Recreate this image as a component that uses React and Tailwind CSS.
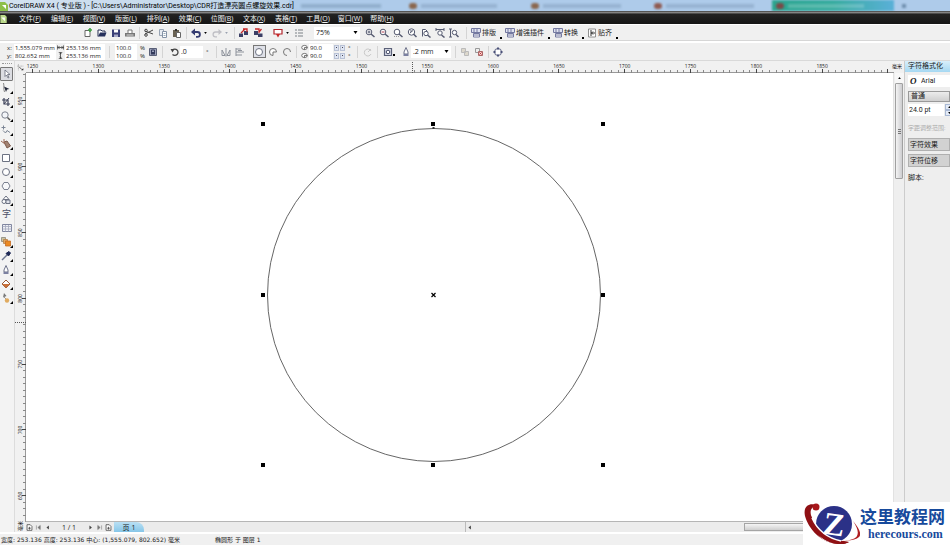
import React from "react";

const ink = "#555a70";
const shapes = {
  fresh: <><path d="M2 2.5h5v6H2z" fill="#fff" stroke="#666" /><path d="M7 0v4M5 2h4" stroke="#43a047" strokeWidth="1.6" /></>,
  open: <><path d="M1 8.5V2h3l1 1h3v1.5" fill="#fff" stroke="#222c50" /><path d="M1 8.5L3 4.5h6.5L8 8.5z" fill="#26305c" /></>,
  save: <><path d="M1 1.5h8v7.5H1z" fill="#3a3f78" /><path d="M3 1.5h4v3H3z" fill="#fff" /><path d="M3 6.5h4V9H3z" fill="#a9abc9" /></>,
  print: <><path d="M3 5V2h4v3" fill="#fff" stroke="#777" /><path d="M0 5h10v3.500H0z" fill="#777" /><path d="M1.500 7h7" stroke="#ddd" /></>,
  cut: <><path d="M1 3l8 3M1 6l8-4" stroke="#444" /><circle cx="2" cy="2.5" r="1.3" stroke="#444" fill="none" /><circle cx="2" cy="7" r="1.3" stroke="#444" fill="none" /></>,
  copy: <><path d="M1.5 1.5h4v6h-4z" fill="#e8ecf2" stroke="#98a4b4" /><path d="M4.5 3.5h4v6h-4z" fill="#fff" stroke="#8492a6" /><path d="M5.5 5.5h2M5.5 7.5h2" stroke="#9ab" /></>,
  paste: <><path d="M1 2h6v7H1z" fill="#6a6253" /><path d="M3 1h2v2H3z" fill="#333" /><path d="M4.500 4.500h4v5h-4z" fill="#fff" stroke="#666" /></>,
  undo: <><path d="M2 4h4.500a2.300 2.300 0 0 1 0 4.800H5" fill="none" stroke="#343b70" strokeWidth="1.800" /><path d="M0 4l4-3.500v7z" fill="#343b70" /></>,
  redo: <><path d="M8 4H3.500a2.300 2.300 0 0 0 0 4.800H5" fill="none" stroke="#c0c0c6" strokeWidth="1.300" /><path d="M10 4L6.500 1v6z" fill="#c0c0c6" /></>,
  importer: <><path d="M0 5.500h4V9H0zM5 3h4v4H5z" fill="#3b3f66" /><path d="M2 5l4-4M4 1h4v3" stroke="#c62828" strokeWidth="1.300" fill="none" /></>,
  exporter: <><path d="M1 3h4v4H1zM5 5.500h4.500V9H5z" fill="#3b3f66" /><path d="M2 1h4v4M8.500 1L6 4" stroke="#c62828" strokeWidth="1.300" fill="none" /></>,
  launch: <><path d="M1 1.500h8v4.500H1z" fill="#fff" stroke="#b3262d" strokeWidth="1.200" /><path d="M3 6h4L5 9.500z" fill="#c62828" /></>,
  list: <path d="M1 2h2M1 5h2M1 8h2M4 2h5M4 5h5M4 8h5" stroke="#7a8086" />,
  zoomIn: <><circle cx="4" cy="4" r="2.800" fill="#fff" stroke={ink} /><path d="M2.500 4h3M4 2.500v3" stroke={ink} /><path d="M6 6l3.500 3" stroke={ink} strokeWidth="1.500" /></>,
  zoomOut: <><circle cx="4" cy="4" r="2.800" fill="#fff" stroke={ink} /><path d="M2.500 4h3" stroke="#b04050" /><path d="M6 6l3.500 3" stroke={ink} strokeWidth="1.500" /></>,
  zoomSel: <><circle cx="4" cy="4" r="2.800" fill="#fff" stroke={ink} /><path d="M1 8.500h6" stroke="#999" strokeDasharray="1 1" /><path d="M6 6l3.500 3" stroke={ink} strokeWidth="1.500" /></>,
  zoomAll: <><circle cx="4.500" cy="4" r="3.200" fill="#fff" stroke={ink} /><path d="M3 5l3-2.500M3 3h2" stroke={ink} /><path d="M6.500 6l3 3" stroke={ink} strokeWidth="1.500" /></>,
  zoomPage: <><path d="M1.500 8.500v-7h3l2 2" fill="#fff" stroke={ink} /><circle cx="5" cy="5.500" r="2.200" fill="#fff" stroke={ink} /><path d="M6.500 7l3 2.500" stroke={ink} strokeWidth="1.500" /></>,
  zoomWide: <><path d="M1 1.500h8M1 0v3M9 0v3" stroke={ink} /><circle cx="5" cy="5" r="2.200" fill="#fff" stroke={ink} /><path d="M6.500 7l3 2.500" stroke={ink} strokeWidth="1.500" /></>,
  zoomTall: <><path d="M1.500 1v8M0 1h3M0 9h3" stroke={ink} /><circle cx="5.500" cy="4.500" r="2.200" fill="#fff" stroke={ink} /><path d="M7 6.500l2.500 2.500" stroke={ink} strokeWidth="1.500" /></>,
  plugin: <><path d="M.5 .5h9v4h-9z" fill="#dfe2f0" stroke="#7479a0" /><path d="M2.500 5.500h6v3.500h-6z" fill="#fff" stroke="#7479a0" /><path d="M3 .5v4M6 .5v4M3 7h5" stroke="#7479a0" /></>,
  snap: <><path d="M1.500 1v8h7V1z" fill="#fff" stroke="#777" strokeWidth=".8" /><path d="M4 2v6M4 5h4M6 3.500L4.500 5 6 6.500" stroke="#333" /></>,
  width: <path d="M.5 2v6M9.500 2v6M1 5h8M3.500 3L1.500 5l2 2M6.500 3l2 2-2 2" stroke="#222" fill="none" />,
  height: <path d="M2.500 .5h5M2.500 9.500h5M5 1v8M3.500 3L5 1.500 6.500 3M3.500 7L5 8.500 6.500 7" stroke="#222" fill="none" />,
  lock: <><path d="M1.500 1.500h7v7h-7z" fill="#9ba0b8" stroke="#5a6078" /><path d="M3 5h4v2.500H3z" fill="#333a5c" /><path d="M3.500 5V3h3v2" stroke="#333a5c" fill="none" /></>,
  rotate: <><path d="M2.500 3a3.200 3.200 0 1 1 0 4.500" fill="none" stroke="#444" strokeWidth="1.300" /><path d="M.5 2h4L2.500 5.500z" fill="#444" /></>,
  mirrorH: <path d="M1 8.500V3l3 5.500zM9 8.500V3L6 8.500zM5 1v8.500" fill="none" stroke="#8e939c" />,
  mirrorV: <path d="M1 2h5M1 5h8M1 8h6M1 1v8M3 3.500h4" fill="none" stroke="#8e939c" />,
  ellipse: <circle cx="5" cy="5" r="3.500" fill="#fff" stroke="#6c7282" />,
  pie: <path d="M5 5h3.500A3.500 3.500 0 1 0 5 8.500z" fill="#fff" stroke="#777" />,
  arc: <path d="M5 8.500A3.500 3.500 0 1 1 8.500 5" fill="none" stroke="#777" />,
  angle: <><ellipse cx="5" cy="5" rx="4" ry="3" fill="#fff" stroke="#444" /><path d="M5 5h4M5 5v3" stroke="#444" /></>,
  dim: <><path d="M8 4A3.500 3.500 0 1 0 8 7" fill="none" stroke="#c9c9c9" /><path d="M5 5l3-3" stroke="#c9c9c9" /></>,
  wrap: <><path d="M1.500 1.500h7v7h-7z" fill="#d9dce8" stroke="#5a6078" strokeWidth="1.200" /><circle cx="5" cy="5" r="1.800" fill="#fff" stroke="#444a66" /></>,
  nib: <><path d="M5 .5L3 5v2h4V5z" fill="#fff" stroke="#6b7088" /><path d="M2.500 7h5v2h-5z" fill="#7b80a0" /></>,
  back: <path d="M1.500 1.500h4v4h-4zM4.500 4.500h4v4h-4z" fill="#ddd8cc" stroke="#bbb" />,
  front: <><path d="M1.500 1.500h4v4h-4z" fill="#eee" stroke="#999" /><path d="M4.500 4.500h4v4h-4z" fill="#f6d3d3" stroke="#a66" /><path d="M5.500 5.500l2 2M7.500 5.500l-2 2" stroke="#b33" /></>,
  convert: <><circle cx="5" cy="5" r="3.500" fill="#fff" stroke="#5a6080" /><path d="M4 .5h2v2H4zM4 7.500h2v2H4zM.5 4h2v2h-2zM7.500 4h2v2h-2z" fill="#4a5078" /></>,
  pick: <path d="M3 1l5 4.500H5.500L7 8.500l-1 .5-1.500-3L3 7.500z" fill="#fff" stroke="#666b78" strokeWidth=".8" />,
  shape: <><path d="M2.500 0C3.500 3 2 5 3.500 9" fill="none" stroke="#888" /><path d="M3 3.500l5.500 2.500-2.500.500-1 2.500z" fill="#23283a" /></>,
  crop: <><path d="M3 1v6h6M1 3h6v6" fill="none" stroke="#3b4058" strokeWidth="1.200" /><path d="M3 7l5-6" stroke="#3b4058" /></>,
  loupe: <><circle cx="4" cy="4" r="3.200" fill="#f2f4f8" stroke="#7d828e" /><path d="M6.500 6.500L9 9" stroke="#555" strokeWidth="1.500" /></>,
  free: <><path d="M2 5.500L4.500 8 6 5.500l3 2" fill="none" stroke="#7b8494" /><path d="M2.500 .5v4M.5 2.500h4" stroke="#7b8494" /></>,
  smart: <><path d="M3 3l3-1 3.500 5L6 9z" fill="#a28272" stroke="#7b5a4c" /><path d="M0 2l4 3M3 0v4" stroke="#9b6b58" /></>,
  rect: <path d="M1.500 1.500h7v7h-7z" fill="#fff" stroke="#6c7282" />,
  poly: <path d="M3 1.500h4l2 3.500-2 3.500H3L1 5z" fill="#f7f8fa" stroke="#7b8190" />,
  basic: <><path d="M5 1L8 4.500H2z" fill="#fff" stroke="#6c7282" /><circle cx="3" cy="6.500" r="2" fill="#fff" stroke="#6c7282" /><path d="M5 5h4v3.500H5z" fill="#dfe2ea" stroke="#6c7282" /></>,
  table: <><path d="M.5 1.500h9v7h-9z" fill="#eef0f6" stroke="#8086a0" /><path d="M.5 3.500h9M.5 6h9M3.500 2v6.500M6.500 2v6.500" stroke="#a3a8bc" strokeWidth=".8" /></>,
  blend: <><path d="M.5 .5h4v4h-4z" fill="#c9c4a4" stroke="#8b8778" strokeWidth=".8" /><path d="M2.500 2.500h4v4h-4z" fill="#e0a860" stroke="#b88048" strokeWidth=".8" /><path d="M4.500 4h5v5h-5z" fill="#ec8a22" stroke="#c46c24" strokeWidth=".8" /></>,
  dropper: <><path d="M1 9l5-5" stroke="#6d7690" strokeWidth="1.500" /><path d="M5 2.500l2.500 2.500L9.500 2 8 .5z" fill="#1e2956" stroke="#1e2956" /></>,
  fill: <><path d="M1 5l4-4 4 4-4 4z" fill="#fff" stroke="#9b5a38" /><path d="M1 5h8L5 9z" fill="#c9713a" /></>,
  inter: <><path d="M3 0l2.500 3L2 4.500z" fill="#777" /><path d="M3 4l3 3" stroke="#999" /><circle cx="6" cy="7.500" r="2.200" fill="#e0ab60" /></>,
  page: <><path d="M1.500 1h4.500l2.500 2.500V9h-7z" fill="#fff" stroke="#333" /><path d="M3 6h4M5 4v4" stroke="#333" /></>,
  first: <path d="M2 2v6M7.500 2L4 5l3.500 3z" fill="#777" stroke="#777" strokeWidth=".8" />,
  prev: <path d="M7 2L3.500 5 7 8z" fill="#444" />,
  next: <path d="M3.500 2L7 5 3.500 8z" fill="#444" />,
  last: <path d="M8 2v6M2.500 2L6 5 2.500 8z" fill="#777" stroke="#777" strokeWidth=".8" />,
  origin: <><path d="M2 0v10M0 3h10" stroke="#888" strokeDasharray="1 1" /><path d="M3 4l4 4" stroke="#222" /><path d="M9 9H6l3-3z" fill="#222" /></>,
};

function Icon({ name, small }) {
  return (
    <svg viewBox="0 0 10 10" aria-hidden="true" className={small ? "h-[7px] w-[7px] shrink-0" : "h-[10px] w-[10px] shrink-0"} fill="none">
      {shapes[name]}
    </svg>
  );
}

function Tool({ name, label }) {
  return (
    <button aria-label={label} className="flex shrink-0 items-center">
      <Icon name={name} />
    </button>
  );
}

function Caret({ dim }) {
  return (
    <button aria-label="更多" className="flex w-2 shrink-0 justify-center">
      <svg viewBox="0 0 4 3" className={dim ? "h-[2px] w-[3px] fill-gray-400" : "h-[2px] w-[3px] fill-black"}><path d="M0 0h4L2 3z" /></svg>
    </button>
  );
}

function Sep() {
  return <span className="mx-1 h-3 w-px shrink-0 bg-[#d4d4d4]" />;
}

function Choice({ label, value, width }) {
  return (
    <span className={"relative flex h-3 shrink-0 items-center bg-white " + width}>
      <select aria-label={label} className="h-full w-full appearance-none bg-transparent pl-[2px] text-[7px] leading-3 outline-none">
        <option>{value}</option>
      </select>
      <svg viewBox="0 0 4 3" className="pointer-events-none absolute right-[2px] h-[3px] w-[5px]"><path d="M0 0h4L2 3z" /></svg>
    </span>
  );
}

function Field({ label, value, width }) {
  return <input aria-label={label} defaultValue={value} className={"h-2 shrink-0 bg-white px-px text-[6px] leading-[8px] outline-none " + width} />;
}

const menus = [["文件", "F"], ["编辑", "E"], ["视图", "V"], ["版面", "L"], ["排列", "A"], ["效果", "C"], ["位图", "B"], ["文本", "X"], ["表格", "T"], ["工具", "O"], ["窗口", "W"], ["帮助", "H"]];

function TitleBar() {
  return (
    <header className="flex h-[11px] shrink-0 items-center overflow-hidden bg-[#aecbea]">
      <div className="flex h-full w-[289px] shrink-0 items-center gap-px bg-linear-to-r from-[#d3e2f0] to-[#bdd4ea]">
        <svg viewBox="0 0 8 10" className="h-[10px] w-2 shrink-0"><path d="M0 1h5l3 3v6H0z" fill="#8cc04b" /><path d="M2 4l4 4V4z" fill="#fff" /></svg>
        <h1 className="text-[7px] leading-[10px] whitespace-nowrap text-black [font-family:Roboto,'Noto_Sans_CJK_SC',sans-serif]">CorelDRAW X4 ( 专业版 ) - [C:\Users\Administrator\Desktop\CDR打造漂亮圆点螺旋效果.cdr]</h1>
      </div>
      <div className="flex h-full flex-1 items-center blur-[1px]">
        <span className="ml-3 h-1 w-[80px] bg-[#7f9cb9]/60" />
        <span className="ml-7 h-[6px] w-2 rounded-full bg-[#8a674e]" />
        <span className="ml-1 h-1 w-[76px] bg-[#7f9cb9]/50" />
        <span className="ml-[34px] h-[6px] w-2 rounded-full bg-[#8a674e]" />
        <span className="ml-1 h-1 w-[78px] bg-[#7f9cb9]/50" />
        <span className="ml-[33px] h-[6px] w-2 rounded-full bg-[#8f5a50]" />
        <span className="ml-1 h-1 w-[88px] bg-[#7f9cb9]/50" />
        <span className="ml-[18px] flex h-full w-[122px] items-center bg-linear-to-r from-[#2ba58f] via-[#35ab9e] to-[#5ab0d8] pl-1">
          <span className="h-[6px] w-2 rounded-full bg-[#7b4a48]" />
          <span className="ml-1 h-1 w-[76px] bg-white/20" />
        </span>
        <span className="ml-2 h-1 w-1 bg-[#6f8eae]" />
      </div>
    </header>
  );
}

function MenuBar() {
  return (
    <nav className="flex h-[14px] shrink-0 items-center border-t border-b border-t-[#555] border-b-white bg-linear-to-b from-[#a0a0a0] from-0% via-[#222] via-20% to-[#161616] to-100%">
      <svg viewBox="0 0 8 10" className="mr-[6px] h-[9px] w-2"><path d="M0 1h5l2 2v7H0z" fill="#b9d88a" /><path d="M1 4l4 4V4z" fill="#fff" /></svg>
      <ul className="flex">
        {menus.map(([name, key]) => (
          <li key={key} className="w-8">
            <button className="block w-full text-center text-[7px] leading-[11px] whitespace-nowrap text-[#f2f2f2]">{name}(<u>{key}</u>)</button>
          </li>
        ))}
      </ul>
    </nav>
  );
}

function StandardBar() {
  return (
    <div className="flex h-4 shrink-0 items-center border-b border-[#d6d6d6] bg-[#f0f0f0] pl-[83px]">
      <div className="flex gap-1">
        <Tool name="fresh" label="新建" />
        <Tool name="open" label="打开" />
        <Tool name="save" label="保存" />
        <Tool name="print" label="打印" />
      </div>
      <Sep />
      <div className="flex gap-1">
        <Tool name="cut" label="剪切" />
        <Tool name="copy" label="复制" />
        <Tool name="paste" label="粘贴" />
      </div>
      <Sep />
      <Tool name="undo" label="撤消" />
      <Caret />
      <span className="w-[3px]" />
      <Tool name="redo" label="重做" />
      <Caret dim />
      <Sep />
      <div className="flex gap-1">
        <Tool name="importer" label="导入" />
        <Tool name="exporter" label="导出" />
      </div>
      <span className="w-[10px]" />
      <Tool name="launch" label="应用程序启动器" />
      <Caret />
      <span className="w-[3px]" />
      <Tool name="list" label="欢迎屏幕" />
      <span className="w-[10px]" />
      <Choice label="缩放级别" value="75%" width="w-[46px]" />
      <div className="ml-[5px] flex gap-1">
        <Tool name="zoomIn" label="放大" />
        <Tool name="zoomOut" label="缩小" />
        <Tool name="zoomSel" label="缩放选定范围" />
        <Tool name="zoomAll" label="缩放全部对象" />
        <Tool name="zoomPage" label="显示页面" />
        <Tool name="zoomWide" label="按页宽显示" />
        <Tool name="zoomTall" label="按页高显示" />
      </div>
      <span className="w-[3px]" />
      <Sep />
      {[["plugin", "排版"], ["plugin", "增强插件"], ["plugin", "转换"], ["snap", "贴齐"]].map(([icon, text]) => (
        <div key={text} className="flex items-center pr-[3px]">
          <button className="flex items-center gap-px text-[7px] leading-3 whitespace-nowrap"><Icon name={icon} />{text}</button>
          <span className="ml-1 h-[2px] w-[2px] self-end bg-black" />
        </div>
      ))}
    </div>
  );
}

function PropertyBar() {
  return (
    <div className="flex h-5 shrink-0 items-center border-t-2 border-b border-t-white border-b-[#d9d9d9] bg-[#f0f0f0] pl-[7px] text-[6px] leading-[8px]">
      <div>
        <label className="flex"><span className="w-[7px]">x:</span><Field label="x" value="1,555.079 mm" width="w-[42px]" /></label>
        <label className="flex"><span className="w-[7px]">y:</span><Field label="y" value="802.652 mm" width="w-[42px]" /></label>
      </div>
      <div className="ml-px">
        <label className="flex items-center gap-px"><Icon name="width" small /><Field label="宽度" value="253.136 mm" width="w-[40px]" /></label>
        <label className="flex items-center gap-px"><Icon name="height" small /><Field label="高度" value="253.136 mm" width="w-[40px]" /></label>
      </div>
      <Sep />
      <span className="w-px" />
      <div>
        <label className="flex gap-[3px]"><Field label="水平比例" value="100.0" width="w-[22px]" />%</label>
        <label className="flex gap-[3px]"><Field label="垂直比例" value="100.0" width="w-[22px]" />%</label>
      </div>
      <span className="w-[3px]" />
      <Tool name="lock" label="锁定比例" />
      <Sep />
      <span className="w-[3px]" />
      <label className="flex h-3 items-center">
        <Icon name="rotate" />
        <input aria-label="旋转角度" defaultValue=".0" className="h-3 w-[23px] bg-white px-px text-[7px] outline-none" />
        <span className="ml-[3px] w-[6px]">°</span>
      </label>
      <Sep />
      <div className="flex gap-1">
        <Tool name="mirrorH" label="水平镜像" />
        <Tool name="mirrorV" label="垂直镜像" />
      </div>
      <span className="w-2" />
      <button aria-label="椭圆形" aria-pressed="true" className="flex h-[13px] w-[13px] shrink-0 items-center justify-center border border-[#777] bg-[#dfe1e8]"><Icon name="ellipse" /></button>
      <div className="ml-[2px] flex gap-1">
        <Tool name="pie" label="饼形" />
        <Tool name="arc" label="弧形" />
      </div>
      <Sep />
      <div>
        {["起始角度", "结束角度"].map((label) => (
          <label key={label} className="flex items-center">
            <Icon name="angle" small />
            <span className="w-px" />
            <Field label={label} value="90.0" width="w-[24px]" />
            <span className="ml-px flex gap-px">
              <button aria-label="减少" className="flex h-[6px] w-[5px] items-center justify-center border border-[#b9c2d6] bg-[#dfe5f2]"><span className="h-px w-px bg-[#445]" /></button>
              <button aria-label="增加" className="flex h-[6px] w-[5px] items-center justify-center border border-[#b9c2d6] bg-[#dfe5f2]"><span className="h-px w-px bg-[#445]" /></button>
            </span>
            <span className="ml-[3px] w-[5px]">°</span>
          </label>
        ))}
      </div>
      <Sep />
      <span className="w-px" />
      <Tool name="dim" label="方向" />
      <Sep />
      <span className="w-px" />
      <Tool name="wrap" label="段落文本换行" />
      <span className="mr-[6px] mb-1 h-[2px] w-[2px] self-end bg-black" />
      <Tool name="nib" label="轮廓" />
      <Choice label="轮廓宽度" value=".2 mm" width="w-[40px]" />
      <Sep />
      <div className="flex gap-1">
        <Tool name="back" label="到图层后面" />
        <Tool name="front" label="到图层前面" />
      </div>
      <Sep />
      <Tool name="convert" label="转换为曲线" />
    </div>
  );
}

const toolbox = [["pick", "挑选"], ["shape", "形状"], ["crop", "裁剪"], ["loupe", "缩放"], ["free", "手绘"], ["smart", "智能填充"], ["rect", "矩形"], ["ellipse", "椭圆形"], ["poly", "多边形"], ["basic", "基本形状"], ["text", "文本"], ["table", "表格"], ["blend", "交互式调和"], ["dropper", "滴管"], ["nib", "轮廓"], ["fill", "填充"], ["inter", "交互式填充"]];
const plain = ["pick", "text", "table"];

function Toolbox() {
  return (
    <aside className="w-[15px] shrink-0 border-r border-[#dcdcdc] bg-[#f3f3f3] pt-[2px]">
      <div className="mx-[2px] mb-[3px] border-t border-dotted border-[#999]" />
      {toolbox.map(([name, label]) => (
        <button key={name} aria-label={label} className={"flex h-[14px] w-[13px] items-center justify-center " + (name === "pick" ? "rounded-[1px] border border-[#777] bg-[#dcdde2]" : "")}>
          {name === "text" ? <span className="text-[9px] leading-[14px] text-[#4b5068]">字</span> : <Icon name={name} />}
          {!plain.includes(name) && <svg viewBox="0 0 3 3" className="mb-px -ml-px h-[3px] w-[3px] shrink-0 self-end"><path d="M3 0v3H0z" /></svg>}
        </button>
      ))}
    </aside>
  );
}

const step = 6.58;

function HorizontalRuler() {
  const ticks = Array.from({ length: 131 }, (_, i) => i);
  return (
    <div className="flex h-3 shrink-0 bg-[#f1f1f1]">
      <button aria-label="标尺原点" className="flex w-[11px] shrink-0 items-center justify-center"><Icon name="origin" small /></button>
      <svg className="h-3 min-w-0 flex-1" fontSize="5" textAnchor="middle">
        <path d="M0 11.500H868" stroke="#999" />
        {ticks.map((i) => <path key={i} d={`M${Math.round(6 + i * step) + 0.5} ${i % 10 ? 9 : 8}V12`} stroke={i % 10 ? "#888" : "#444"} />)}
        {Array.from({ length: 13 }, (_, i) => <text key={i} x={6.5 + i * step * 10} y="7" fill="#222">{1250 + i * 50}</text>)}
        <path d="M386.500 1v11" stroke="#555" strokeDasharray="1 1" />
        <text x="871" y="7" fontSize="5">毫米</text>
      </svg>
    </div>
  );
}

function VerticalRuler() {
  const ticks = Array.from({ length: 68 }, (_, i) => i);
  return (
    <svg className="h-full w-[11px] shrink-0 bg-[#f1f1f1]" fontSize="5" textAnchor="middle">
      <path d="M10.500 0V449" stroke="#999" />
      {ticks.map((i) => <path key={i} d={`M${(i + 6) % 10 ? 8 : 7} ${Math.round(1 + i * step) + 0.5}H11`} stroke={(i + 6) % 10 ? "#888" : "#444"} />)}
      {[950, 900, 850, 800, 750, 700, 650].map((n, i) => {
        const y = 28 + i * step * 10;
        return <text key={n} x="7" y={y} transform={`rotate(-90 7 ${y})`} fill="#222">{n}</text>;
      })}
      <path d="M0 249.500h11" stroke="#555" strokeDasharray="1 1" />
      <text x="7" y="453" transform="rotate(-90 7 453)">毫米</text>
    </svg>
  );
}

function Canvas() {
  const xs = [237, 407, 577];
  const ys = [51, 222, 392];
  return (
    <svg className="h-full min-w-0 flex-1 bg-white" role="img" aria-label="椭圆形">
      <circle cx="408" cy="222" r="166.500" fill="none" stroke="#555" strokeWidth=".9" />
      {xs.map((x, i) => ys.map((y, j) => (i === 1 && j === 1 ? null : <rect key={`${x}-${y}`} x={x - 2} y={y - 2} width="4" height="4" />)))}
      <path d="M405.500 220l4 4M409.500 220l-4 4" stroke="#000" strokeWidth="1.200" />
      <rect x="406.500" y="54" width="2" height="2" fill="#333" />
    </svg>
  );
}

function PageBar() {
  return (
    <div className="flex h-[11px] shrink-0 items-center border-t border-[#b5b5b5] bg-[#ebebeb] text-[7px] leading-[9px]">
      <div className="flex w-[440px] items-center border-r border-[#bbb]">
        <button aria-label="添加页" className="mr-[2px]"><Icon name="page" small /></button>
        <button aria-label="第一页" className="mr-px"><Icon name="first" small /></button>
        <button aria-label="上一页" className="ml-px"><Icon name="prev" small /></button>
        <span className="w-9 text-center">1 / 1</span>
        <button aria-label="下一页"><Icon name="next" small /></button>
        <button aria-label="最后一页" className="mr-[2px] ml-[2px]"><Icon name="last" small /></button>
        <button aria-label="添加页" className="mr-[2px]"><Icon name="page" small /></button>
        <button className="h-[10px] w-[30px] rounded-tr-lg bg-linear-to-b from-[#b9e0f4] to-[#86c6e8] text-center text-[7px] leading-[9px]">页 1</button>
      </div>
      <button aria-label="向左滚动" className="flex"><Icon name="prev" small /></button>
      <div className="flex h-full flex-1 justify-end bg-[#ececec]">
        <div className="h-[8px] w-[160px] self-center border border-[#a5a5a5] bg-linear-to-b from-[#f5f5f5] to-[#cfcfcf]" />
      </div>
    </div>
  );
}

function ScrollColumn() {
  return (
    <div className="flex w-[11px] shrink-0 flex-col items-center border-l border-[#e2e2e2] bg-[#efefef]">
      <button aria-label="向上滚动" className="flex h-[10px] w-[9px] items-center justify-center bg-[#f7f7f7]"><svg viewBox="0 0 4 3" className="h-[2px] w-[3px]"><path d="M0 3h4L2 0z" /></svg></button>
      <div className="flex h-[96px] w-[8px] flex-col items-center justify-center gap-px rounded-[1px] border border-[#a0a0a0] bg-linear-to-r from-[#f4f4f4] to-[#cdcdd0]">
        <span className="h-px w-[3px] bg-[#777]" /><span className="h-px w-[3px] bg-[#777]" /><span className="h-px w-[3px] bg-[#777]" />
      </div>
    </div>
  );
}

function FormatPanel() {
  return (
    <aside className="flex w-[46px] shrink-0 flex-col overflow-hidden border-l border-[#ccc] bg-[#eeeeee] text-[7px] leading-[10px] whitespace-nowrap [font-family:Roboto,'Noto_Sans_CJK_SC',sans-serif]">
      <h2 className="h-[11px] bg-linear-to-b from-[#d8effb] to-[#a5d8f2] pl-[3px] leading-[11px]">字符格式化</h2>
      <div className="mt-[3px] ml-[3px] flex h-3 items-center bg-white">
        <span className="w-[13px] pl-[2px] text-[9px] font-bold italic [font-family:'Liberation_Serif',serif]">O</span>
        <input aria-label="字体" defaultValue="Arial" className="w-[26px] bg-transparent outline-none" />
      </div>
      <select aria-label="字体样式" className="mt-1 ml-[3px] h-[11px] appearance-none border border-[#999] bg-linear-to-b from-[#ececec] to-[#cfcfcf] pl-[2px] leading-[9px] outline-none">
        <option>普通</option>
      </select>
      <div className="mt-[2px] ml-[3px] flex h-3">
        <input aria-label="字号" defaultValue="24.0 pt" className="w-9 bg-white px-px outline-none" />
        <span className="ml-px flex flex-col">
          <button aria-label="增大" className="flex h-[6px] w-2 items-center justify-center border border-[#a9b9d4] bg-[#e3eaf6]"><svg viewBox="0 0 4 3" className="h-[2px] w-[3px]"><path d="M0 3h4L2 0z" /></svg></button>
          <button aria-label="减小" className="flex h-[6px] w-2 items-center justify-center border border-[#a9b9d4] bg-[#e3eaf6]"><svg viewBox="0 0 4 3" className="h-[2px] w-[3px]"><path d="M0 0h4L2 3z" /></svg></button>
        </span>
      </div>
      <p className="mt-[7px] pl-[3px] text-[6px] text-[#aaa]">字距调整范围:</p>
      <button className="mt-[5px] ml-[3px] h-[13px] border border-[#b0b0b0] bg-[#d2d2d2] pl-px text-left">字符效果</button>
      <button className="mt-[3px] ml-[3px] h-[13px] border border-[#b0b0b0] bg-[#d2d2d2] pl-px text-left">字符位移</button>
      <p className="mt-[6px] pl-[3px]">脚本:</p>
    </aside>
  );
}

function Watermark() {
  return (
    <div className="absolute right-0 bottom-0 flex h-[43px] w-[147px] items-center bg-white">
      <svg viewBox="0 0 57 43" className="h-[43px] w-[57px] shrink-0">
        <path d="M14 3C5 0 0 5 2 14c3 11 13 24 27 27 8 2 14 1 17-1C30 38 14 27 9 16 6 9 8 5 14 3z" fill="#8f1014" />
        <circle cx="31" cy="22" r="19" fill="#fff" />
        <circle cx="31" cy="22" r="18" fill="#2b3187" />
        <path d="M8 14c4 12 16 23 30 25l8 1c-3 2-9 3-17 1C22 39 14 33 9 27z" fill="#8f1014" />
        <path d="M9 16c5 11 15 20 29 23" fill="none" stroke="#fff" strokeWidth="1.500" />
        <path d="M50 19c6 7 9 13 6 16-3 3-10 4-18 3 9 1 14-1 16-4 2-4 0-9-4-15z" fill="#b01c20" />
        <text x="31" y="33" fontSize="32" fontWeight="bold" textAnchor="middle" fill="#fff" transform="rotate(8 31 22)" className="[font-family:'Liberation_Serif',serif]">Z</text>
        <circle cx="13" cy="5" r="3.500" fill="#a8171b" />
      </svg>
      <div className="whitespace-nowrap text-[#174a9c]">
        <p className="text-[17px] leading-[20px] font-bold">这里教程网</p>
        <p className="pl-2 text-[12px] leading-[14px] font-bold [font-family:'Liberation_Serif',serif]">herecours.com</p>
      </div>
    </div>
  );
}

export default function App() {
  return (
    <div className="relative flex h-screen flex-col overflow-hidden bg-[#f0f0f0] text-[#1a1a1a] [font-family:'Open_Sans','Noto_Sans_CJK_SC',sans-serif]">
      <TitleBar />
      <MenuBar />
      <StandardBar />
      <PropertyBar />
      <main className="flex min-h-0 flex-1">
        <Toolbox />
        <section className="flex min-w-0 flex-1 flex-col">
          <HorizontalRuler />
          <div className="flex min-h-0 flex-1">
            <VerticalRuler />
            <div className="flex min-w-0 flex-1 flex-col">
              <div className="flex min-h-0 flex-1">
                <Canvas />
                <ScrollColumn />
              </div>
              <PageBar />
            </div>
          </div>
        </section>
        <FormatPanel />
      </main>
      <footer className="flex h-[13px] shrink-0 items-center border-t-2 border-white bg-[#f0f0f0] pl-px text-[6px] leading-[10px] whitespace-nowrap [font-family:'DejaVu_Sans','Noto_Sans_CJK_SC',sans-serif]">
        <span className="w-[214px]">宽度: 253.136 高度: 253.136 中心: (1,555.079, 802.652) 毫米</span>
        <span>椭圆形 于 图层 1</span>
      </footer>
      <Watermark />
    </div>
  );
}
